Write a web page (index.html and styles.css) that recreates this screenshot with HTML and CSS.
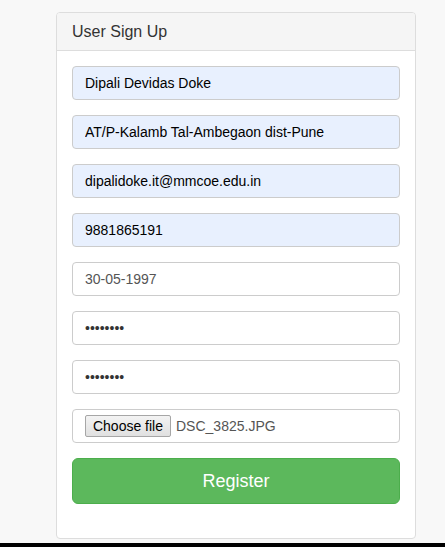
FILE: index.html
```html
<!DOCTYPE html>
<html>
<head>
<meta charset="utf-8">
<link rel="stylesheet" href="styles.css">
</head>
<body>
<div class="page">
  <div class="panel">
    <div class="panel-heading">User Sign Up</div>
    <form class="panel-body">
      <input class="field autofill" type="text" value="Dipali Devidas Doke">
      <input class="field autofill" type="text" value="AT/P-Kalamb Tal-Ambegaon dist-Pune">
      <input class="field autofill" type="text" value="dipalidoke.it@mmcoe.edu.in">
      <input class="field autofill" type="text" value="9881865191">
      <input class="field" type="text" value="30-05-1997">
      <input class="field pw" type="password" value="12345678">
      <input class="field pw" type="password" value="12345678">
      <div class="field file">
        <span class="file-btn">Choose file</span>
        <span class="file-name">DSC_3825.JPG</span>
      </div>
      <button class="register" type="button">Register</button>
    </form>
  </div>
</div>
</body>
</html>
```
FILE: styles.css
```css
html { background: #000; }
body {
  margin: 0;
  font-family: "Liberation Sans", Arial, sans-serif;
  font-size: 14px;
  color: #333;
}
.page {
  height: 543px;
  background: #f8f8f8;
  padding-top: 12px;
  box-sizing: border-box;
  overflow: hidden;
}
.panel {
  margin-left: 56px;
  width: 360px;
  box-sizing: border-box;
  background: #fff;
  border: 1px solid #ddd;
  border-radius: 4px;
}
.panel-heading {
  height: 38px;
  box-sizing: border-box;
  padding: 10px 15px;
  font-size: 16px;
  line-height: 17.6px;
  color: #333;
  background: #f5f5f5;
  border-bottom: 1px solid #ddd;
  border-radius: 3px 3px 0 0;
}
.panel-body {
  margin: 0;
  padding: 15px 15px 34px;
  display: flex;
  flex-direction: column;
  gap: 15px;
}
.field {
  display: block;
  width: 100%;
  height: 34px;
  box-sizing: border-box;
  margin: 0;
  padding: 6px 12px;
  font-family: "Liberation Sans", Arial, sans-serif;
  font-size: 14px;
  line-height: 20px;
  color: #555;
  background: #fff;
  border: 1px solid #ccc;
  border-radius: 4px;
  outline: none;
}
.autofill {
  background: #e8f0fe;
  color: #000;
}
.pw { color: #333; }
.file {
  display: flex;
  align-items: center;
  gap: 5px;
}
.file-btn {
  display: inline-block;
  height: 22px;
  width: 86px;
  box-sizing: border-box;
  line-height: 20px;
  text-align: center;
  font-size: 14px;
  color: #000;
  background: linear-gradient(#f3f3f3, #e0e0e0);
  border: 1px solid #a6a6a6;
  border-radius: 2px;
}
.file-name { color: #555; }
.register {
  display: block;
  width: 100%;
  height: 46px;
  margin: 0;
  padding: 10px 16px;
  font-family: "Liberation Sans", Arial, sans-serif;
  font-size: 18px;
  line-height: 24px;
  color: #fff;
  background: #5cb85c;
  border: 1px solid #4cae4c;
  border-radius: 6px;
}
```
